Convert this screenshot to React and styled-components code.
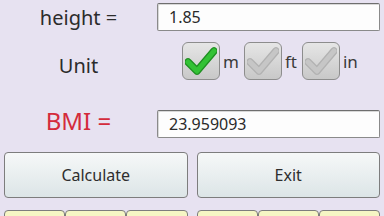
import styled, { createGlobalStyle } from "styled-components";

const GlobalStyle = createGlobalStyle`
  html, body {
    margin: 0;
    padding: 0;
    background: #e7e2f1;
    font-family: "Noto Sans", "Open Sans", sans-serif;
    overflow: hidden;
  }
`;

const Screen = styled.div`
  width: 384px;
  height: 216px;
  padding: 3px 4px 0 0;
  box-sizing: border-box;
  background: #e7e2f1;
  overflow: hidden;
`;

const FormRow = styled.div`
  display: grid;
  grid-template-columns: 157px 1fr;
  align-items: center;
  height: ${(p) => p.$h}px;
  margin-bottom: ${(p) => p.$mb}px;
`;

const Label = styled.div`
  text-align: center;
  font-size: ${(p) => p.$size || 20}px;
  color: ${(p) => p.$color || "#2b2b2b"};
  padding-left: ${(p) => p.$shift || 0}px;
  transform: translateY(${(p) => p.$dy || 0}px);
`;

const Field = styled.div`
  height: 28px;
  box-sizing: border-box;
  border: 1px solid #8a8a8a;
  border-top-color: #6e6e6e;
  border-radius: 2px;
  background: #fdfdfd;
  box-shadow: inset 1px 1px 0 #d8d8d8;
  display: flex;
  align-items: center;
  padding-left: 11px;
  font-size: 16px;
  color: #2a2a2a;
`;

const UnitGroup = styled.div`
  display: flex;
  align-items: center;
  padding-left: 25px;
  height: 38px;
`;

const Box = styled.div`
  width: 38px;
  height: 38px;
  box-sizing: border-box;
  border: 1.5px solid #8d8d8d;
  border-radius: 6px;
  background: linear-gradient(#e6e6e6, #c8c8c8);
  display: flex;
  align-items: center;
  justify-content: center;
`;

const UnitText = styled.span`
  font-size: 17px;
  color: #3a3a3a;
  margin: 0 5px 0 3px;
`;

const ButtonRow = styled.div`
  display: grid;
  grid-template-columns: 1fr 1fr;
  gap: 9px;
  padding-left: 4px;
  margin-bottom: 12px;
`;

const Button = styled.div`
  height: 46px;
  box-sizing: border-box;
  border: 1.5px solid #7d7d7d;
  border-radius: 4px;
  background: linear-gradient(#f6f8f8, #dce5e7);
  display: flex;
  align-items: center;
  justify-content: center;
  font-size: 16px;
  color: #2e2e2e;
`;

const KeyRow = styled.div`
  display: grid;
  grid-template-columns: 1fr 1fr;
  gap: 9px;
  padding-left: 4px;
`;

const KeyGroup = styled.div`
  display: grid;
  grid-template-columns: repeat(3, 1fr);
`;

const Key = styled.div`
  height: 24px;
  box-sizing: border-box;
  border: 1.5px solid #7d7d7d;
  border-radius: 4px;
  background: #f6f6c4;
`;

const Check = ({ on }) => (
  <svg width="32" height="28" viewBox="0 0 32 28">
    <path
      d="M3 15 L12 24 L29 4"
      fill="none"
      stroke={on ? "#1f8f22" : "#b2b2b2"}
      strokeWidth="7.5"
      strokeLinecap="round"
      strokeLinejoin="round"
    />
    <path
      d="M3 15 L12 24 L29 4"
      fill="none"
      stroke={on ? "#33c235" : "#c6c6c6"}
      strokeWidth="5"
      strokeLinecap="round"
      strokeLinejoin="round"
    />
  </svg>
);

export default function App() {
  return (
    <Screen>
      <GlobalStyle />
      <FormRow $h={28} $mb={11}>
        <Label>height =</Label>
        <Field>1.85</Field>
      </FormRow>
      <FormRow $h={38} $mb={27}>
        <Label $shift={-4} $dy={4}>
          Unit
        </Label>
        <UnitGroup>
          <Box>
            <Check on />
          </Box>
          <UnitText>m</UnitText>
          <Box>
            <Check />
          </Box>
          <UnitText>ft</UnitText>
          <Box>
            <Check />
          </Box>
          <UnitText>in</UnitText>
        </UnitGroup>
      </FormRow>
      <FormRow $h={28} $mb={17}>
        <Label $size={24} $color="#d42b3b" $dy={-3}>
          BMI =
        </Label>
        <Field>23.959093</Field>
      </FormRow>
      <ButtonRow>
        <Button>Calculate</Button>
        <Button>Exit</Button>
      </ButtonRow>
      <KeyRow>
        <KeyGroup>
          <Key />
          <Key />
          <Key />
        </KeyGroup>
        <KeyGroup>
          <Key />
          <Key />
          <Key />
        </KeyGroup>
      </KeyRow>
    </Screen>
  );
}
